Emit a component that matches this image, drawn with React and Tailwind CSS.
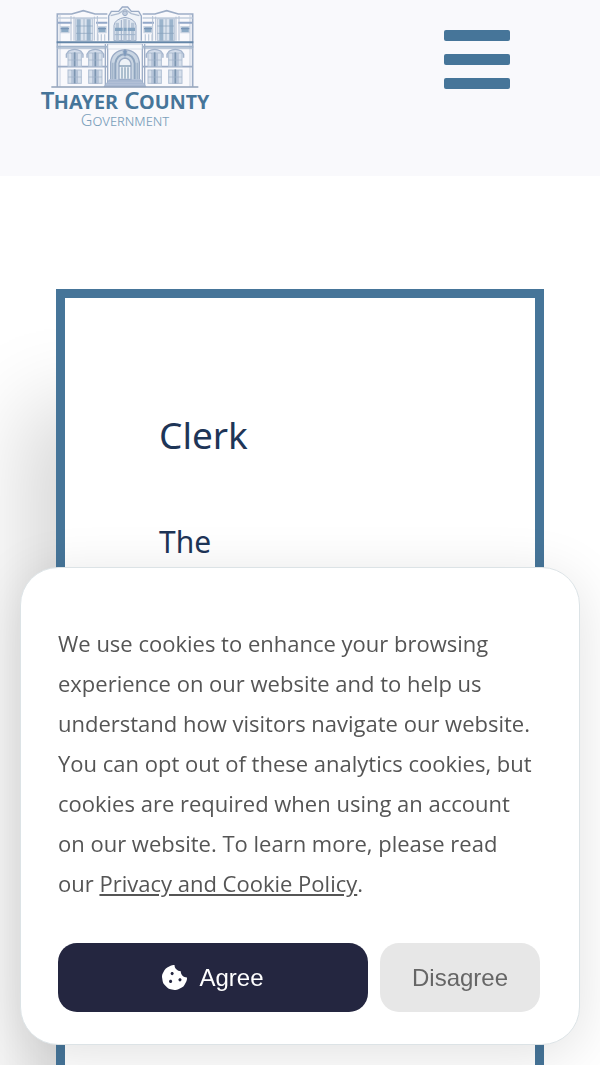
import React from "react";
import { FaCookieBite } from "react-icons/fa";

function LowerWindow({ x, y, arched }) {
  return (
    <g transform={`translate(${x} ${y})`}>
      {arched && (
        <path d="M-25 20V10L-18 0Q0 -10 18 0L25 10V20" fill="#d3dcea" stroke="#a3b4cc" strokeWidth="4" />
      )}
      <rect x="-20" y="6" width="40" height="40" fill="#d6dfeb" stroke="#b0bfd3" strokeWidth="3" />
      <rect x="-9" y="8" width="18" height="38" fill="#b5c4d9" />
      <path d="M0 4V46" stroke="#7d96b1" strokeWidth="5" />
      <path d="M-20 27H20" stroke="#a0b2c9" strokeWidth="2" />
    </g>
  );
}

function Wing() {
  return (
    <g fill="none" stroke="#9dadc6">
      <path d="M82 260V42H125L160 32L195 42H232" strokeWidth="5" />
      <path d="M90 260V44" stroke="#c6d0df" strokeWidth="3" />
      <path d="M82 54H232" stroke="#c0ccdc" strokeWidth="4" />
      <path d="M84 68H125M198 68H232" stroke="#92a7c8" strokeWidth="6" />
      <path d="M123 122V48M132 122V50M193 122V50M202 122V48" stroke="#b3c0d4" strokeWidth="3" />
      <path d="M136 56H188V122H136Z" fill="#dbe3ee" stroke="#bcc8d9" strokeWidth="3" />
      <path d="M146 58V122M176 58V122" stroke="#9bb4cc" strokeWidth="12" />
      <path d="M162 56V122" stroke="#bcc9da" strokeWidth="5" />
      <path d="M138 78H188M138 100H188" stroke="#86a0bb" strokeWidth="2" />
      <path d="M92 80H117V98H92ZM204 80H228V98H204Z" fill="#8caac5" stroke="#c9d3e1" strokeWidth="4" />
      <path d="M92 86H117M204 86H228" stroke="#7893b5" strokeWidth="4" />
      <path d="M204 103V122M214 103V122M224 103V122" stroke="#c0ccdc" strokeWidth="4" />
      <path d="M82 200H232" strokeWidth="5" />
      <path d="M82 146H230" stroke="#b4c1d4" strokeWidth="3" />
      <LowerWindow x={134} y={153} arched />
      <LowerWindow x={196} y={153} arched />
      <LowerWindow x={134} y={204} />
      <LowerWindow x={196} y={204} />
      <path d="M226 132V258M233 132V258" strokeWidth="4" />
    </g>
  );
}

function Courthouse() {
  return (
    <svg viewBox="60 0 450 270" className="h-[90px] w-[150px]" aria-hidden="true">
      <Wing />
      <g transform="translate(570 0) scale(-1 1)">
        <Wing />
      </g>
      <g fill="none" stroke="#9aabc5">
        <path d="M236 122V48L244 34L266 34L277 21H293L304 34L326 34L334 48V122" fill="#f0f3f8" strokeWidth="4" />
        <path d="M242 47L266 41L285 28L304 41L328 47" stroke="#adbbcf" strokeWidth="4" />
        <circle cx="285" cy="40" r="7" fill="#c3cfdf" strokeWidth="3" />
        <path d="M252 122V76Q255 57 285 52Q315 57 318 76V122Z" fill="#e0e7f0" strokeWidth="3" />
        <path d="M262 122V68M285 122V57M308 122V68" stroke="#b6c5d7" strokeWidth="10" />
        <path d="M274 122V60M297 122V60" strokeWidth="3" />
        <path d="M255 88H278M281 88H290M293 88H315" stroke="#84a3c0" strokeWidth="10" />
        <path d="M254 104H316" stroke="#9db2ca" strokeWidth="3" />
        <path d="M80 127H490" stroke="#6486a8" strokeWidth="6" />
        <path d="M80 140H490" stroke="#a1b4cb" strokeWidth="6" />
        <path d="M234 133H336V147H234Z" fill="#f8f9fc" stroke="#c5d0de" strokeWidth="2" />
        <path d="M242 238V187Q246 153 285 149Q324 153 328 187V238" fill="#c9d5e3" strokeWidth="4" />
        <path d="M256 238V190Q259 165 285 162Q311 165 314 190V238" stroke="#8fa5bf" strokeWidth="6" />
        <path d="M267 238V191Q270 176 285 174Q300 176 303 191V238Z" fill="#edf2f7" strokeWidth="4" />
        <path d="M248 188V238M322 188V238" stroke="#a3b6cb" strokeWidth="5" />
        <path d="M279 154L285 148L291 154L288 168H282Z" fill="#7e9abc" strokeWidth="2" />
        <path d="M267 198H303M276 202V236M285 202V236M294 202V236" stroke="#8ba4bb" strokeWidth="4" />
        <path d="M238 239H332L348 260H222Z" fill="#a8b8d2" stroke="#9aaecb" strokeWidth="2" />
        <path d="M234 247H336M227 254H343" stroke="#b9c6da" strokeWidth="2" />
        <path d="M64 261H505" stroke="#91a1b8" strokeWidth="4" />
      </g>
    </svg>
  );
}

function Header() {
  return (
    <header className="flex h-44 items-start justify-between bg-[#f9f9fc] pr-[90px] pl-10">
      <a href="#home" className="flex w-[170px] flex-col items-center whitespace-nowrap">
        <Courthouse />
        <span className="text-[24px] leading-5 font-semibold text-[#467599] [font-variant-caps:small-caps]">
          Thayer County
        </span>
        <span className="text-[16px] leading-5 font-light text-[#7ba0bb] [font-variant-caps:small-caps]">
          Government
        </span>
      </a>
      <button type="button" aria-label="Open menu" className="mt-[30px] flex w-[66px] flex-col gap-[13px]">
        <span className="h-[11px] w-full rounded-xs bg-[#467599]" />
        <span className="h-[11px] w-full rounded-xs bg-[#467599]" />
        <span className="h-[11px] w-full rounded-xs bg-[#467599]" />
      </button>
    </header>
  );
}

function CookieNotice() {
  return (
    <section
      aria-label="Cookie notice"
      className="fixed inset-x-5 bottom-5 rounded-[38px] border border-[#dce3e6] bg-white pt-[55px] pr-[39px] pb-8 pl-[37px] shadow-[0_10px_56px_rgba(0,0,0,0.12)]"
    >
      <p className="pr-1 font-['Open_Sans',sans-serif] text-[22px] leading-10 text-[#555555]">
        We use cookies to enhance your browsing experience on our website and to help us understand how
        visitors navigate our website. You can opt out of these analytics cookies, but cookies are required
        when using an account on our website. To learn more, please read our{" "}
        <a href="#privacy" className="underline">Privacy and Cookie Policy</a>.
      </p>
      <div className="mt-10 flex gap-3 font-['Liberation_Sans',sans-serif] text-[24px]">
        <button
          type="button"
          className="flex h-[69px] flex-1 items-center justify-center gap-3 rounded-[19px] bg-[#242640] text-white"
        >
          <FaCookieBite className="size-[25px]" aria-hidden="true" />
          Agree
        </button>
        <button type="button" className="h-[69px] w-40 rounded-[19px] bg-[#e7e7e7] text-[#666666]">
          Disagree
        </button>
      </div>
    </section>
  );
}

export default function App() {
  return (
    <div className="h-screen overflow-hidden bg-white font-['Noto_Sans','Open_Sans',sans-serif]">
      <Header />
      <main className="px-14 pt-[113px]">
        <article className="min-h-screen border-[9px] border-[#467599] bg-white px-[94px] pt-[108px] text-[#1e3557] shadow-[-56px_92px_80px_-24px_rgba(0,0,0,0.16)]">
          <h1 className="text-[37px] leading-[58px]">Clerk</h1>
          <p className="mt-[54px] text-[30px] leading-[48px]">The</p>
        </article>
      </main>
      <CookieNotice />
    </div>
  );
}
